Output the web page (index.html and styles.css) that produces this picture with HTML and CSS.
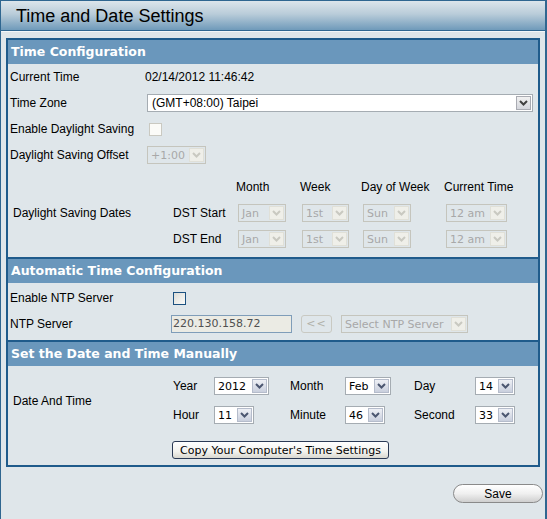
FILE: index.html
```html
<!DOCTYPE html>
<html lang="en">
<head>
    <meta charset="UTF-8">
    <title>Time and Date Settings</title>
    <link rel="stylesheet" href="styles.css">
</head>
<body>
    <div class="page">
        <div class="title-bar">Time and Date Settings</div>

        <div class="box">
            <!-- Time Configuration -->
            <div class="sec-head first">Time Configuration</div>
            <div class="row">
                <span class="lbl">Current Time</span>
                <span class="val">02/14/2012 11:46:42</span>
            </div>
            <div class="row">
                <span class="lbl">Time Zone</span>
                <span class="sel w-zone zone">
                    <span class="txt">(GMT+08:00) Taipei</span>
                    <span class="arr"><svg width="9" height="6" viewBox="0 0 9 6"><path d="M1 1 L4.5 4.5 L8 1" fill="none" stroke="currentColor" stroke-width="2"/></svg></span>
                </span>
            </div>
            <div class="row">
                <span class="lbl">Enable Daylight Saving</span>
                <span class="chk dis chk-ds"></span>
            </div>
            <div class="row">
                <span class="lbl">Daylight Saving Offset</span>
                <span class="sel dis w-offset">
                    <span class="txt">+1:00</span>
                    <span class="arr"><svg width="9" height="6" viewBox="0 0 9 6"><path d="M1 1 L4.5 4.5 L8 1" fill="none" stroke="currentColor" stroke-width="2"/></svg></span>
                </span>
            </div>

            <div class="dst">
                <span class="dst-label">Daylight Saving Dates</span>
                <span class="col-head c-month">Month</span>
                <span class="col-head">Week</span>
                <span class="col-head">Day of Week</span>
                <span class="col-head">Current Time</span>

                <span class="dst-name">DST Start</span>
                <span class="cell"><span class="sel dis w-mon"><span class="txt">Jan</span><span class="arr"><svg width="9" height="6" viewBox="0 0 9 6"><path d="M1 1 L4.5 4.5 L8 1" fill="none" stroke="currentColor" stroke-width="2"/></svg></span></span></span>
                <span class="cell"><span class="sel dis w-week"><span class="txt">1st</span><span class="arr"><svg width="9" height="6" viewBox="0 0 9 6"><path d="M1 1 L4.5 4.5 L8 1" fill="none" stroke="currentColor" stroke-width="2"/></svg></span></span></span>
                <span class="cell"><span class="sel dis w-dow"><span class="txt">Sun</span><span class="arr"><svg width="9" height="6" viewBox="0 0 9 6"><path d="M1 1 L4.5 4.5 L8 1" fill="none" stroke="currentColor" stroke-width="2"/></svg></span></span></span>
                <span class="cell"><span class="sel dis w-hour"><span class="txt">12 am</span><span class="arr"><svg width="9" height="6" viewBox="0 0 9 6"><path d="M1 1 L4.5 4.5 L8 1" fill="none" stroke="currentColor" stroke-width="2"/></svg></span></span></span>

                <span class="dst-name">DST End</span>
                <span class="cell"><span class="sel dis w-mon"><span class="txt">Jan</span><span class="arr"><svg width="9" height="6" viewBox="0 0 9 6"><path d="M1 1 L4.5 4.5 L8 1" fill="none" stroke="currentColor" stroke-width="2"/></svg></span></span></span>
                <span class="cell"><span class="sel dis w-week"><span class="txt">1st</span><span class="arr"><svg width="9" height="6" viewBox="0 0 9 6"><path d="M1 1 L4.5 4.5 L8 1" fill="none" stroke="currentColor" stroke-width="2"/></svg></span></span></span>
                <span class="cell"><span class="sel dis w-dow"><span class="txt">Sun</span><span class="arr"><svg width="9" height="6" viewBox="0 0 9 6"><path d="M1 1 L4.5 4.5 L8 1" fill="none" stroke="currentColor" stroke-width="2"/></svg></span></span></span>
                <span class="cell"><span class="sel dis w-hour"><span class="txt">12 am</span><span class="arr"><svg width="9" height="6" viewBox="0 0 9 6"><path d="M1 1 L4.5 4.5 L8 1" fill="none" stroke="currentColor" stroke-width="2"/></svg></span></span></span>
            </div>

            <!-- Automatic Time Configuration -->
            <div class="sec-head">Automatic Time Configuration</div>
            <div class="ntp">
                <div class="row">
                    <span class="lbl lbl-wide">Enable NTP Server</span>
                    <span class="chk chk-ntp"></span>
                </div>
                <div class="row">
                    <span class="lbl lbl-wide">NTP Server</span>
                    <span class="ntp-input">220.130.158.72</span>
                    <span class="btn-arrow">&lt;&lt;</span>
                    <span class="sel dis w-ntp"><span class="txt">Select NTP Server</span><span class="arr"><svg width="9" height="6" viewBox="0 0 9 6"><path d="M1 1 L4.5 4.5 L8 1" fill="none" stroke="currentColor" stroke-width="2"/></svg></span></span>
                </div>
            </div>

            <!-- Set the Date and Time Manually -->
            <div class="sec-head">Set the Date and Time Manually</div>
            <div class="manual">
                <span class="man-label">Date And Time</span>

                <span class="m-lbl">Year</span>
                <span class="cell"><span class="sel w-year"><span class="txt">2012</span><span class="arr"><svg width="9" height="6" viewBox="0 0 9 6"><path d="M1 1 L4.5 4.5 L8 1" fill="none" stroke="currentColor" stroke-width="2"/></svg></span></span></span>
                <span class="m-lbl">Month</span>
                <span class="cell"><span class="sel w-feb"><span class="txt">Feb</span><span class="arr"><svg width="9" height="6" viewBox="0 0 9 6"><path d="M1 1 L4.5 4.5 L8 1" fill="none" stroke="currentColor" stroke-width="2"/></svg></span></span></span>
                <span class="m-lbl">Day</span>
                <span class="cell"><span class="sel w-two"><span class="txt">14</span><span class="arr"><svg width="9" height="6" viewBox="0 0 9 6"><path d="M1 1 L4.5 4.5 L8 1" fill="none" stroke="currentColor" stroke-width="2"/></svg></span></span></span>

                <span class="m-lbl">Hour</span>
                <span class="cell"><span class="sel w-two"><span class="txt">11</span><span class="arr"><svg width="9" height="6" viewBox="0 0 9 6"><path d="M1 1 L4.5 4.5 L8 1" fill="none" stroke="currentColor" stroke-width="2"/></svg></span></span></span>
                <span class="m-lbl">Minute</span>
                <span class="cell"><span class="sel w-two"><span class="txt">46</span><span class="arr"><svg width="9" height="6" viewBox="0 0 9 6"><path d="M1 1 L4.5 4.5 L8 1" fill="none" stroke="currentColor" stroke-width="2"/></svg></span></span></span>
                <span class="m-lbl">Second</span>
                <span class="cell"><span class="sel w-two"><span class="txt">33</span><span class="arr"><svg width="9" height="6" viewBox="0 0 9 6"><path d="M1 1 L4.5 4.5 L8 1" fill="none" stroke="currentColor" stroke-width="2"/></svg></span></span></span>

                <span class="copy-row"><button class="btn-copy">Copy Your Computer's Time Settings</button></span>
            </div>
        </div>

        <div class="actions">
            <button class="btn-save">Save</button>
        </div>
    </div>
</body>
</html>
```

FILE: styles.css
```css
html, body {
    margin: 0;
    padding: 0;
}
body {
    font-family: 'Liberation Sans', Arial, sans-serif;
    font-size: 12px;
    color: #000;
    background-color: #dfe6ea;
}
.page {
    width: 547px;
    height: 519px;
    box-sizing: border-box;
    border-left: 1px solid #2f6690;
    border-right: 2px solid #2f6690;
    background-color: #dfe6ea;
}
.title-bar {
    height: 31px;
    box-sizing: border-box;
    border-top: 1px solid #2f6690;
    border-bottom: 1px solid #2f6690;
    box-shadow: 0 1px 0 #f4f7f9;
    background: linear-gradient(#dce5eb, #b9ccd9 45%, #6f9aba);
    padding-left: 15px;
    font-size: 18px;
    line-height: 30px;
    color: #000;
}
.box {
    margin: 7px 5px 0 5px;
    border: 2px solid #1f5b8b;
}
.sec-head {
    height: 24px;
    line-height: 24px;
    background-color: #6a97bc;
    color: #fff;
    font-family: 'DejaVu Sans', Verdana, sans-serif;
    font-weight: bold;
    font-size: 12.5px;
    padding-left: 3px;
    border-top: 2px solid #1f5b8b;
}
.sec-head.first {
    border-top: none;
}
.row {
    display: flex;
    align-items: center;
    height: 26px;
}
.lbl {
    width: 137px;
    padding-left: 2px;
    box-sizing: border-box;
    flex-shrink: 0;
}
.lbl-wide {
    width: 163px;
}
.val {
    white-space: nowrap;
}

/* fake select boxes */
.sel {
    display: inline-flex;
    align-items: center;
    justify-content: space-between;
    height: 18px;
    box-sizing: border-box;
    border: 1px solid #a5acb2;
    background-color: #fff;
    font-family: 'DejaVu Sans', Verdana, sans-serif;
    font-size: 11px;
    color: #000;
    margin-left: 2px;
}
.sel .txt {
    padding-left: 3px;
    white-space: nowrap;
}
.sel .arr {
    width: 15px;
    height: 14px;
    margin-right: 1px;
    box-sizing: border-box;
    border: 1px solid #b5bccb;
    background: linear-gradient(#eef0f5, #c9cfdd);
    color: #4b5670;
    display: flex;
    align-items: center;
    justify-content: center;
}
.sel.dis {
    background-color: transparent;
    border-color: #c5c5bd;
    color: #a8a8a8;
}
.sel.dis .arr {
    border-color: #e0e0d8;
    background: #efefe9;
    color: #c9c9c1;
}
.sel.zone {
    font-family: 'Liberation Sans', Arial, sans-serif;
    font-size: 12px;
}
.sel.zone .txt {
    padding-left: 4px;
}
.sel.zone .arr {
    background: linear-gradient(#f1f1f1, #d4d6dc);
    border-color: #a9abb2;
    color: #404040;
}
.w-zone { width: 386px; }
.w-offset { width: 59px; }
.w-mon { width: 48px; }
.w-week { width: 47px; }
.w-dow { width: 48px; }
.w-hour { width: 61px; }
.w-ntp { width: 127px; }
.w-year { width: 55px; }
.w-feb { width: 46px; }
.w-two { width: 40px; }

/* checkboxes */
.chk {
    display: inline-block;
    width: 13px;
    height: 13px;
    box-sizing: border-box;
    border: 1px solid #1c5180;
    background: linear-gradient(135deg, #dcdcd7, #fbfbf9);
}
.chk.dis {
    border-color: #cac9c1;
    background: #fbfbf8;
}
.chk-ds {
    margin-left: 4px;
}
.chk-ntp {
    margin-left: 2px;
}

/* daylight saving dates */
.dst {
    display: grid;
    grid-template-columns: 165px 63px 64px 61px 83px auto;
    grid-template-rows: 26px 26px 26px;
    align-items: center;
    padding: 6px 0 5px 0;
}
.dst-label {
    grid-row: 1 / span 3;
    padding-left: 5px;
    align-self: center;
}
.c-month {
    grid-column: 3;
}
.dst-name {
    grid-column: 2;
}
.cell {
    display: flex;
    align-items: center;
}

/* ntp */
.ntp {
    padding: 2px 0 3px 0;
}
.ntp-input {
    display: inline-block;
    width: 121px;
    height: 18px;
    line-height: 16px;
    box-sizing: border-box;
    border: 1px solid #7f9db9;
    background-color: #ebebe4;
    font-family: 'DejaVu Sans', Verdana, sans-serif;
    font-size: 11px;
    color: #505050;
    padding-left: 1px;
}
.btn-arrow {
    display: inline-block;
    width: 31px;
    height: 18px;
    line-height: 16px;
    box-sizing: border-box;
    margin-left: 9px;
    border: 1px solid #c9c9c2;
    border-radius: 3px;
    text-align: center;
    font-family: 'DejaVu Sans', Verdana, sans-serif;
    font-size: 11px;
    color: #b0b0a8;
    letter-spacing: 1px;
}
.w-ntp {
    margin-left: 9px;
}

/* manual date/time */
.manual {
    display: grid;
    grid-template-columns: 165px 39px 78px 53px 71px 59px auto;
    grid-template-rows: 26px 26px auto;
    row-gap: 3px;
    align-items: center;
    padding: 7px 0 6px 0;
}
.man-label {
    grid-row: 1 / span 2;
    padding-left: 5px;
}
.m-lbl {
    white-space: nowrap;
}
.copy-row {
    grid-column: 2 / -1;
    margin-top: 10px;
    display: flex;
}
.btn-copy {
    height: 18px;
    width: 217px;
    margin-left: -1px;
    padding: 0;
    box-sizing: border-box;
    border: 1px solid #2b3a55;
    border-radius: 3px;
    background: linear-gradient(#ffffff, #f2f2ee 60%, #d9d8d0);
    font-family: 'DejaVu Sans', Verdana, sans-serif;
    font-size: 11px;
    color: #000;
}

/* save */
.actions {
    display: flex;
    justify-content: flex-end;
    padding: 17px 2px 0 0;
}
.btn-save {
    width: 90px;
    height: 19px;
    padding: 0;
    box-sizing: border-box;
    border: 1px solid #8a8a8a;
    border-radius: 10px;
    background: linear-gradient(#ffffff, #f0f0f0 50%, #cfcfcf);
    font-family: 'Liberation Sans', Arial, sans-serif;
    font-size: 12px;
    color: #000;
}
```
